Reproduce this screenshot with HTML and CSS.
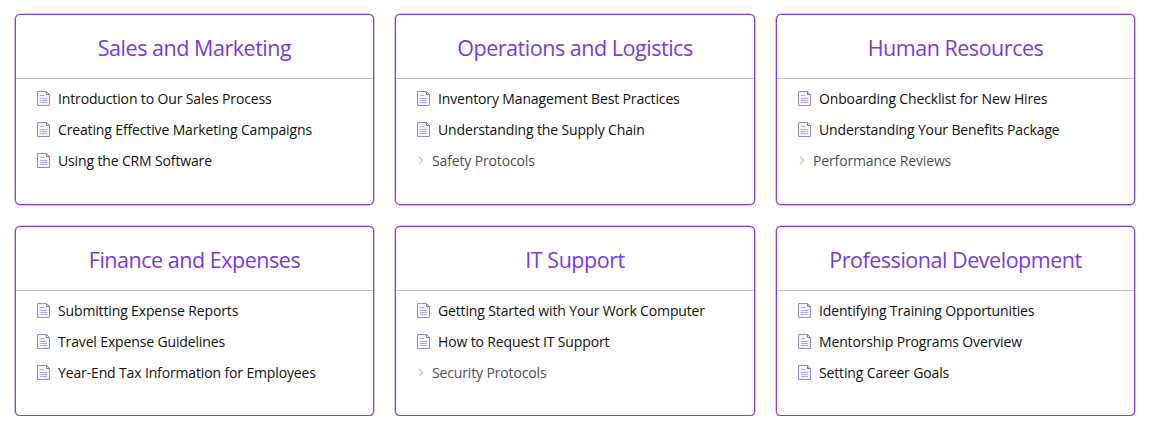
FILE: index.html
```
<!DOCTYPE html>
<html lang="en">
<head>
<meta charset="utf-8">
<title>Knowledge Base</title>
<link rel="stylesheet" href="styles.css">
</head>
<body>
<svg class="sprite" aria-hidden="true">
  <symbol id="doc" viewBox="0 0 13 15">
    <path class="paper" d="M.5.5h9l3 3v11H.5z"/>
    <path class="ink" d="M9.5.5v3h3"/>
    <path class="lines" d="M3 4.5h4M3 7.5h7M3 9.5h7M3 11.5h7"/>
  </symbol>
  <symbol id="chevron" viewBox="0 0 6 9">
    <path class="arrow" d="M1 .8l3.6 3.7L1 8.2"/>
  </symbol>
</svg>
<main class="grid">
  <section class="card">
    <h2 class="title">Sales and Marketing</h2>
    <ul class="list">
      <li class="item"><svg class="doc"><use href="#doc"/></svg><span>Introduction to Our Sales Process</span></li>
      <li class="item"><svg class="doc"><use href="#doc"/></svg><span>Creating Effective Marketing Campaigns</span></li>
      <li class="item"><svg class="doc"><use href="#doc"/></svg><span>Using the CRM Software</span></li>
    </ul>
  </section>
  <section class="card">
    <h2 class="title">Operations and Logistics</h2>
    <ul class="list">
      <li class="item"><svg class="doc"><use href="#doc"/></svg><span>Inventory Management Best Practices</span></li>
      <li class="item"><svg class="doc"><use href="#doc"/></svg><span>Understanding the Supply Chain</span></li>
      <li class="item sub"><svg class="chevron"><use href="#chevron"/></svg><span>Safety Protocols</span></li>
    </ul>
  </section>
  <section class="card">
    <h2 class="title">Human Resources</h2>
    <ul class="list">
      <li class="item"><svg class="doc"><use href="#doc"/></svg><span>Onboarding Checklist for New Hires</span></li>
      <li class="item"><svg class="doc"><use href="#doc"/></svg><span>Understanding Your Benefits Package</span></li>
      <li class="item sub"><svg class="chevron"><use href="#chevron"/></svg><span>Performance Reviews</span></li>
    </ul>
  </section>
  <section class="card">
    <h2 class="title">Finance and Expenses</h2>
    <ul class="list">
      <li class="item"><svg class="doc"><use href="#doc"/></svg><span>Submitting Expense Reports</span></li>
      <li class="item"><svg class="doc"><use href="#doc"/></svg><span>Travel Expense Guidelines</span></li>
      <li class="item"><svg class="doc"><use href="#doc"/></svg><span>Year-End Tax Information for Employees</span></li>
    </ul>
  </section>
  <section class="card">
    <h2 class="title">IT Support</h2>
    <ul class="list">
      <li class="item"><svg class="doc"><use href="#doc"/></svg><span>Getting Started with Your Work Computer</span></li>
      <li class="item"><svg class="doc"><use href="#doc"/></svg><span>How to Request IT Support</span></li>
      <li class="item sub"><svg class="chevron"><use href="#chevron"/></svg><span>Security Protocols</span></li>
    </ul>
  </section>
  <section class="card">
    <h2 class="title">Professional Development</h2>
    <ul class="list">
      <li class="item"><svg class="doc"><use href="#doc"/></svg><span>Identifying Training Opportunities</span></li>
      <li class="item"><svg class="doc"><use href="#doc"/></svg><span>Mentorship Programs Overview</span></li>
      <li class="item"><svg class="doc"><use href="#doc"/></svg><span>Setting Career Goals</span></li>
    </ul>
  </section>
</main>
</body>
</html>
```
FILE: styles.css
```
* { box-sizing: border-box; }
body {
  margin: 0;
  background: #fff;
  font-family: "Segoe UI", "Open Sans", "Noto Sans", sans-serif;
}
.sprite { position: absolute; width: 0; height: 0; }
.grid {
  display: grid;
  grid-template-columns: 359px 360px 359px;
  grid-template-rows: 191px 190px;
  gap: 21px;
  padding: 14px 0 0 15px;
}
.card {
  border: 1px solid #8a3dd2;
  border-radius: 5px;
  background: #fff;
  box-shadow: 0 0 0 0.5px #b685e4;
}
.title {
  margin: 0;
  height: 64px;
  line-height: 65px;
  border-bottom: 1px solid #c1c1c6;
  text-align: center;
  font-size: 21.5px;
  font-weight: 400;
  letter-spacing: -0.47px;
  color: #7b3ad6;
}
.list {
  list-style: none;
  margin: 0;
  padding: 4px 0 0 21px;
}
.item {
  display: flex;
  align-items: center;
  gap: 8px;
  height: 31.1px;
  font-size: 14px;
  letter-spacing: -0.14px;
  color: #111;
  white-space: nowrap;
}
.sub { color: #505055; }
.doc { width: 13px; height: 15px; margin-left: -0.5px; margin-right: 0.5px; flex: none; }
.chevron { width: 6px; height: 9px; margin-left: 1px; flex: none; }
.paper { fill: #f7f5ff; stroke: #9a86dc; stroke-width: 1; }
.ink { fill: none; stroke: #8069cf; stroke-width: 1; }
.lines { fill: none; stroke: #b3a5e8; stroke-width: 1; }
.arrow { fill: none; stroke: #efb6b6; stroke-width: 1.3; }
```
